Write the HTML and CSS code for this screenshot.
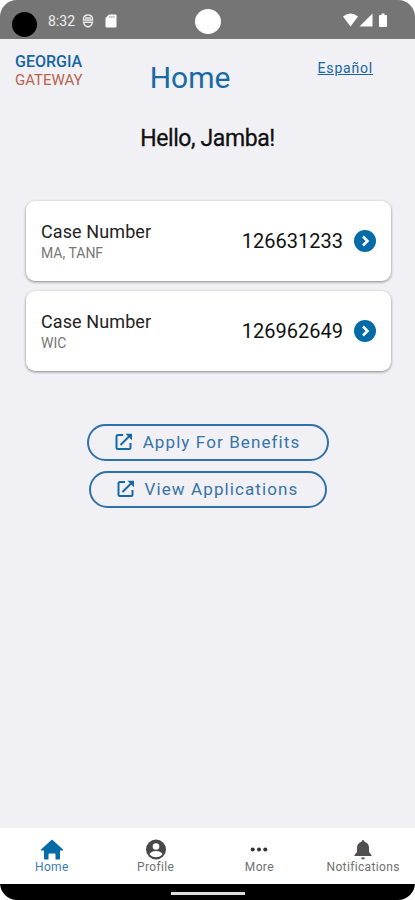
FILE: index.html
```html
<!DOCTYPE html>
<html lang="en">
	<head>
		<meta charset="utf-8">
		<meta name="viewport" content="width=device-width, initial-scale=1.0">
		<title>Georgia Gateway</title>
		<link rel="stylesheet" href="styles.css">
	</head>
	<body>
		<div class="screen">
			<div class="status">
				<span class="dot"></span>
				<span class="time">8:32</span>
				<svg class="shield" width="12" height="14" viewBox="0 0 12 14" fill="none" stroke="#e6e6e6" stroke-width="1.4">
					<path d="M1.5 6V4.5Q2 1 6 1t4.5 3.5V6zM1.5 8.2h9Q10 12 6 13 2 12 1.5 8.2zM3 4h6"/>
				</svg>
				<svg class="sdcard" width="12" height="14" viewBox="0 0 12 14">
					<path fill="#fff" d="M4 .5h6.5q1 0 1 1v11q0 1-1 1h-9q-1 0-1-1V4z"/>
					<path stroke="#999" d="M5 2v2M7 2v2M9 2v2"/>
				</svg>
				<span class="camera"></span>
				<svg class="signals" width="46" height="15" viewBox="0 0 46 15" fill="#fff">
					<path d="M0 3.5Q7.500-2.500 15 3.500L7.500 13.500z"/>
					<path d="M29.500 .5v13H16.500z"/>
					<path d="M38.500 .5h3v1.500h1.500q1 0 1 1v10q0 1-1 1h-6q-1 0-1-1V3q0-1 1-1h1.500z"/>
				</svg>
			</div>
			<header>
				<div class="brand">
					<div class="georgia">GEORGIA</div>
					<div class="gateway">GATEWAY</div>
				</div>
				<h1>Home</h1>
				<a class="language" href="#">Español</a>
			</header>
			<main>
				<h2>Hello, Jamba!</h2>
				<div class="cards">
					<div class="card">
						<div>
							<div class="label">Case Number</div>
							<div class="programs">MA, TANF</div>
						</div>
						<span class="number">126631233</span>
						<svg width="22" height="22" viewBox="0 0 22 22">
							<circle cx="11" cy="11" r="11" fill="#056ba6"/>
							<path d="M9 6.500l4.500 4.500L9 15.500" fill="none" stroke="#fff" stroke-width="2.500"/>
						</svg>
					</div>
					<div class="card">
						<div>
							<div class="label">Case Number</div>
							<div class="programs">WIC</div>
						</div>
						<span class="number">126962649</span>
						<svg width="22" height="22" viewBox="0 0 22 22">
							<circle cx="11" cy="11" r="11" fill="#056ba6"/>
							<path d="M9 6.500l4.500 4.500L9 15.500" fill="none" stroke="#fff" stroke-width="2.500"/>
						</svg>
					</div>
				</div>
				<div class="actions">
					<button class="apply">
						<svg width="18" height="18" viewBox="0 0 18 18" fill="none" stroke="#1769a5" stroke-width="2">
							<path d="M8 2H3Q1.500 2 1.500 3.500v11Q1.500 16 3 16h11q1.500 0 1.500-1.500V10M5.500 12L15 2.500"/>
							<path d="M10.500 .8H17v6.500z" fill="#1769a5" stroke="none"/>
						</svg>
						<span>Apply For Benefits</span>
					</button>
					<button class="view">
						<svg width="18" height="18" viewBox="0 0 18 18" fill="none" stroke="#1769a5" stroke-width="2">
							<path d="M8 2H3Q1.500 2 1.500 3.500v11Q1.500 16 3 16h11q1.500 0 1.500-1.500V10M5.500 12L15 2.500"/>
							<path d="M10.500 .8H17v6.500z" fill="#1769a5" stroke="none"/>
						</svg>
						<span>View Applications</span>
					</button>
				</div>
			</main>
			<nav>
				<div class="tab active">
					<svg width="24" height="22" viewBox="0 0 24 22" fill="#056ba6">
						<path d="M12 .5l11 10q.5 1-.5 1H20v8q0 1-1 1h-3.500v-5q0-1-1-1h-5q-1 0-1 1v5H5q-1 0-1-1v-8H1.500q-1 0-.5-1z"/>
					</svg>
					<span>Home</span>
				</div>
				<div class="tab">
					<svg width="24" height="22" viewBox="0 0 24 22">
						<circle cx="12" cy="10.500" r="10" fill="#484848"/>
						<circle cx="12" cy="7.500" r="3.300" fill="#fff"/>
						<path d="M5.500 15Q7.500 12 12 12t6.500 3Q16 18.300 12 18.300t-6.500-3.300z" fill="#fff"/>
					</svg>
					<span>Profile</span>
				</div>
				<div class="tab">
					<svg width="24" height="22" viewBox="0 0 24 22" fill="#333">
						<circle cx="5.700" cy="10.500" r="2"/>
						<circle cx="12" cy="10.500" r="2"/>
						<circle cx="18.300" cy="10.500" r="2"/>
					</svg>
					<span>More</span>
				</div>
				<div class="tab">
					<svg width="24" height="22" viewBox="0 0 24 22" fill="#505050">
						<path d="M12 1q1.300 0 1.500 1.700Q18 4 18 9v4l2.500 3v1h-17v-1L6 13V9q0-5 4.500-6.300Q10.700 1 12 1z"/>
						<path d="M10 18.500h4q-.5 2-2 2t-2-2z"/>
					</svg>
					<span>Notifications</span>
				</div>
			</nav>
			<div class="gesture"><span></span></div>
		</div>
	</body>
</html>
```
FILE: styles.css
```css
body {
	margin: 0;
	background-color: white;
	font-family: Roboto, "Liberation Sans", sans-serif;
}

svg {
	display: block;
	flex: none;
}

h1, h2 {
	margin: 0;
	font-weight: normal;
}

.screen {
	display: flex;
	flex-direction: column;
	width: 415px;
	height: 900px;
	border-radius: 17px;
	overflow: hidden;
	background-color: #f0f0f5;
}

.status {
	position: relative;
	display: flex;
	align-items: center;
	box-sizing: border-box;
	height: 39px;
	padding: 2px 26px 0 12px;
	background-color: #757575;
}

.dot {
	width: 25px;
	height: 25px;
	margin-top: 7px;
	border-radius: 50%;
	background-color: black;
}

.time {
	margin-left: 11px;
	font-size: 14px;
	color: #eee;
	width: 27px;
}

.shield {
	margin-left: 7px;
}

.sdcard {
	margin-left: 11px;
}

.camera {
	position: absolute;
	left: 195px;
	top: 9px;
	width: 26px;
	height: 25px;
	border-radius: 50%;
	background-color: white;
}

.signals {
	margin-left: auto;
}

header {
	display: grid;
	grid-template-columns: 100px 1fr 108px;
	height: 64px;
	padding: 0 42px 0 15px;
}

.brand {
	padding-top: 13px;
}

.georgia {
	font-size: 16px;
	line-height: 19px;
	font-weight: 500;
	color: #1765a3;
}

.gateway {
	font-size: 15px;
	line-height: 18px;
	color: #b9644c;
}

h1 {
	padding-top: 20px;
	text-align: center;
	font-size: 30px;
	line-height: 37px;
	color: #176aa5;
}

.language {
	justify-self: end;
	padding-top: 20px;
	font-size: 14px;
	line-height: 18px;
	letter-spacing: 0.8px;
	color: #1765a3;
}

main {
	flex: 1;
}

h2 {
	padding-top: 22px;
	text-align: center;
	font-size: 23px;
	line-height: 28px;
	letter-spacing: -0.4px;
	-webkit-text-stroke: 0.3px #111;
	color: #111;
}

.cards {
	display: flex;
	flex-direction: column;
	gap: 10px;
	padding: 48px 24px 0 26px;
}

.card {
	display: flex;
	align-items: center;
	box-sizing: border-box;
	height: 80px;
	padding: 0 15px;
	border-radius: 9px;
	background-color: white;
	box-shadow: 0 1px 3px rgba(0, 0, 0, 0.45);
}

.label {
	padding-top: 1px;
	font-size: 18px;
	line-height: 22px;
	letter-spacing: 0.1px;
	color: #222;
}

.programs {
	font-size: 14px;
	line-height: 20px;
	color: #777;
}

.number {
	margin-left: auto;
	margin-right: 11px;
	font-size: 20px;
	color: #111;
}

.actions {
	display: flex;
	flex-direction: column;
	align-items: center;
	gap: 10px;
	padding-top: 53px;
}

button {
	display: flex;
	align-items: center;
	justify-content: center;
	gap: 10px;
	box-sizing: border-box;
	height: 37px;
	padding: 0 0 1px;
	border: 2px solid #2f72aa;
	border-radius: 19px;
	background: none;
	font-family: inherit;
	font-size: 17px;
	letter-spacing: 1.1px;
	color: #3873a9;
}

.apply {
	width: 242px;
}

.view {
	width: 238px;
}

nav {
	display: grid;
	grid-template-columns: repeat(4, 1fr);
	height: 56px;
	background-color: white;
}

.tab {
	display: flex;
	flex-direction: column;
	align-items: center;
	padding-top: 11px;
	font-size: 12px;
	line-height: 12px;
	letter-spacing: 0.35px;
	color: #707070;
}

.active {
	color: #3b7db3;
}

.gesture {
	display: flex;
	justify-content: center;
	height: 16px;
	background-color: black;
}

.gesture span {
	width: 74px;
	height: 3px;
	margin-top: 8px;
	background-color: #ddd;
}
```
